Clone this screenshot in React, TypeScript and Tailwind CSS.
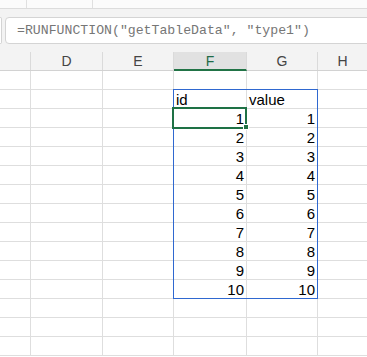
const cols = [
  { key: "", w: "w-[31px]" },
  { key: "D", w: "w-[72px]" },
  { key: "E", w: "w-[71px]" },
  { key: "F", w: "w-[73px]" },
  { key: "G", w: "w-[71px]" },
  { key: "H", w: "w-[49px]" },
];

const values = [1, 2, 3, 4, 5, 6, 7, 8, 9, 10];

function cellText(row: number, col: number): { text: string; align: string } | null {
  if (row === 1 && col === 3) return { text: "id", align: "left" };
  if (row === 1 && col === 4) return { text: "value", align: "left" };
  if (row >= 2 && row <= 11 && (col === 3 || col === 4))
    return { text: String(values[row - 2]), align: "right" };
  return null;
}

export default function App() {
  const rows = Array.from({ length: 15 }, (_, i) => i);
  return (
    <div className="w-[367px] h-[357px] overflow-hidden bg-white font-['Liberation_Sans',Arial,sans-serif]">
      {/* top strip */}
      <div className="h-[9px] bg-[#fbfbfb] border-b border-[#dcdcdc] flex">
        <div className="w-[27px] border-r border-[#e0e0e0]" />
        <div className="w-[66px] border-r border-[#e0e0e0]" />
      </div>

      {/* formula bar */}
      <div className="bg-[#f3f3f3] pt-[8px] pb-[8px] flex overflow-hidden">
        <div className="w-[2px] h-[27px] bg-white border-y border-r border-[#d4d4d4] rounded-r-[3px] shrink-0" />
        <div className="ml-[3px] h-[27px] w-[380px] shrink-0 bg-white border border-[#d4d4d4] rounded-[4px] flex items-center pl-[11px]">
          <span className="font-['Liberation_Mono',monospace] text-[13.2px] text-[#767676] whitespace-pre">
            =RUNFUNCTION("getTableData", "type1")
          </span>
        </div>
      </div>

      {/* column headers */}
      <div className="flex h-[19px] bg-[#f3f3f3] border-b border-[#d2d2d2]">
        {cols.map((c, i) => (
          <div
            key={i}
            className={`${c.w} shrink-0 flex items-center justify-center text-[14px] leading-none ${
              i < cols.length - 1 ? "border-r border-[#dadada]" : ""
            } ${c.key === "F" ? "bg-[#e1e1e1] text-[#1f6b47] border-b-2 border-b-[#217346] -mb-[1px]" : "text-[#444]"}`}
          >
            {c.key}
          </div>
        ))}
      </div>

      {/* grid */}
      <div className="relative">
        {rows.map((r) => (
          <div key={r} className="flex h-[19px]">
            {cols.map((c, ci) => {
              const t = cellText(r, ci);
              return (
                <div
                  key={ci}
                  className={`${c.w} shrink-0 border-b border-[#dedede] ${
                    ci < cols.length - 1 ? "border-r" : ""
                  } flex items-end px-[2px] pb-[1px] text-[15px] leading-none text-black ${
                    t?.align === "right" ? "justify-end" : "justify-start"
                  }`}
                >
                  {t?.text}
                </div>
              );
            })}
          </div>
        ))}

        {/* table range outline */}
        <div className="absolute left-[173px] top-[18px] w-[145px] h-[210px] border border-solid border-[#2f68d0]" />

        {/* active cell */}
        <div className="absolute left-[172px] top-[36px] w-[75px] h-[22px] border-2 border-solid border-[#1e7145]" />
        <div className="absolute left-[243px] top-[53px] w-[6px] h-[6px] bg-[#1e7145] border border-white" />
      </div>
    </div>
  );
}
